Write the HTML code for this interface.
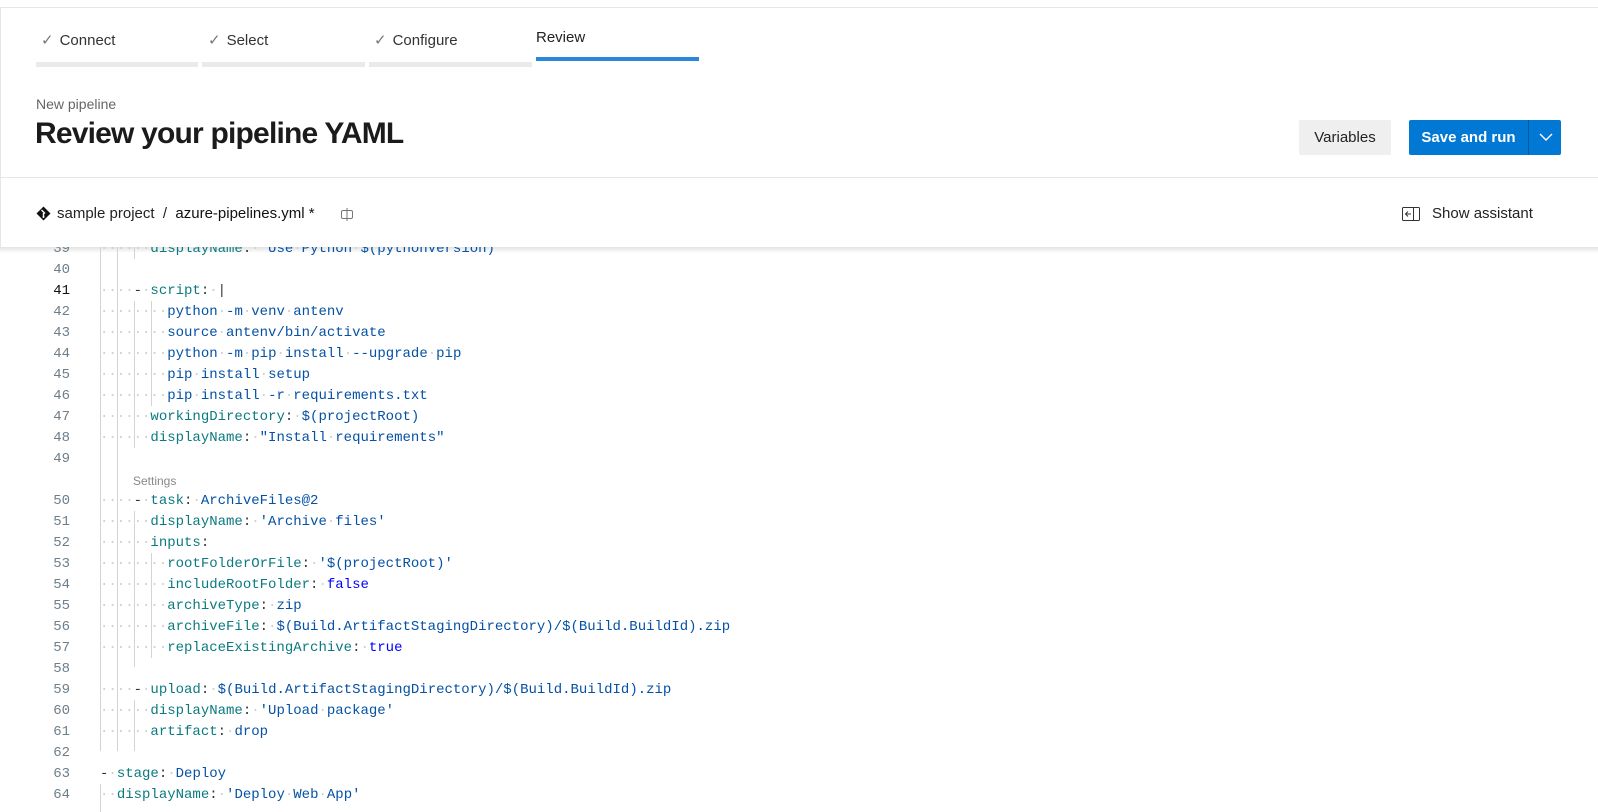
<!DOCTYPE html>
<html><head><meta charset="utf-8"><style>
*{margin:0;padding:0;box-sizing:border-box}
body{width:1598px;height:812px;overflow:hidden;background:#fff;font-family:"Liberation Sans",sans-serif;color:#201f1e;position:relative}
.abs{position:absolute}
.topline{left:0;top:7px;width:1598px;height:1px;background:#e6e6e6}
.leftline{left:0;top:7px;width:1px;height:240px;background:#e6e6e6}
.tab{top:31px;font-size:15px;color:#333}
.tab .ck{color:#777;margin-right:6px}
.bar{top:62px;height:5px;background:#eaeaea}
.ln{position:absolute;left:0;width:70px;text-align:right;color:#6e7e8a;font-family:"Liberation Mono",monospace;font-size:14px}
.cl{position:absolute;left:100px;white-space:pre;font-family:"Liberation Mono",monospace;font-size:14px;color:#0451a5}
.d{color:#cfcfcf}
.k{color:#0b7a80}
.p{color:#333}
.b{color:#0000ff}
.g{position:absolute;width:1px;background:#d3d3d3}
</style></head><body>
<div class="abs topline"></div>
<div class="abs leftline"></div>

<div class="abs tab" style="left:41px"><span class="ck">✓</span>Connect</div>
<div class="abs tab" style="left:208px"><span class="ck">✓</span>Select</div>
<div class="abs tab" style="left:374px"><span class="ck">✓</span>Configure</div>
<div class="abs tab" style="left:536px;top:29px;color:#222">Review</div>
<div class="abs bar" style="left:36px;width:162px"></div>
<div class="abs bar" style="left:202px;width:163px"></div>
<div class="abs bar" style="left:369px;width:163px"></div>
<div class="abs" style="left:536px;top:57px;width:163px;height:4px;background:#2b88d8"></div>

<div class="abs" style="left:36px;top:96px;font-size:14px;color:#666">New pipeline</div>
<div class="abs" style="left:35px;top:117px;font-size:30px;font-weight:bold;color:#1b1b1b;letter-spacing:-0.8px">Review your pipeline YAML</div>

<div class="abs" style="left:1299px;top:120px;width:92px;height:35px;background:#efefef;border-radius:2px;font-size:15px;text-align:center;line-height:35px;color:#222">Variables</div>
<div class="abs" style="left:1409px;top:120px;width:152px;height:35px;background:#0078d4;border-radius:2px"></div>
<div class="abs" style="left:1409px;top:120px;width:119px;height:35px;font-size:15px;font-weight:bold;color:#fff;text-align:center;line-height:35px">Save and run</div>
<div class="abs" style="left:1528px;top:120px;width:1px;height:35px;background:#005a9e"></div>
<svg class="abs" style="left:1538px;top:131px" width="16" height="12" viewBox="0 0 16 12"><path d="M2 3 L8 9 L14 3" stroke="#fff" stroke-width="1.4" fill="none"/></svg>

<div class="abs" style="left:0;top:177px;width:1598px;height:1px;background:#e6e6e6"></div>

<svg class="abs" style="left:36px;top:206px" width="15" height="15" viewBox="0 0 15 15"><path d="M7.5 0.5 L14.5 7.5 L7.5 14.5 L0.5 7.5Z" fill="#111"/><path d="M5.5 4 L9 7.5 M7.5 7 L7.5 11" stroke="#fff" stroke-width="1.4"/><circle cx="7.5" cy="11" r="1" fill="#fff"/></svg>
<div class="abs" style="left:57px;top:205px;font-size:15px;color:#222">sample project&nbsp;&nbsp;/&nbsp;&nbsp;<span style="color:#111">azure-pipelines.yml *</span></div>
<svg class="abs" style="left:340px;top:207px" width="14" height="15" viewBox="0 0 14 15"><rect x="1.5" y="3.5" width="11" height="8" rx="1.5" fill="none" stroke="#777"/><path d="M7 1 V14" stroke="#777"/></svg>

<svg class="abs" style="left:1402px;top:207px" width="18" height="14" viewBox="0 0 18 14"><rect x="0.5" y="0.5" width="17" height="13" rx="1" fill="none" stroke="#333"/><path d="M11.5 1 V13" stroke="#333"/><path d="M9 7 H3.5 M6 4.5 L3.5 7 L6 9.5" stroke="#333" fill="none"/></svg>
<div class="abs" style="left:1432px;top:205px;font-size:15px;color:#222">Show assistant</div>

<div class="abs" style="left:0;top:247px;width:1598px;height:565px;overflow:hidden">
<div style="position:absolute;left:0;top:0;width:1598px;height:6px;background:linear-gradient(#e2e2e2,rgba(255,255,255,0))"></div>
<div class="g" style="left:100px;top:0;height:504px"></div>
<div class="g" style="left:117px;top:0;height:504px"></div>
<div class="g" style="left:134px;top:0;height:12px"></div>
<div class="g" style="left:134px;top:54px;height:147px"></div>
<div class="g" style="left:151px;top:54px;height:105px"></div>
<div class="g" style="left:134px;top:264px;height:156px"></div>
<div class="g" style="left:151px;top:306px;height:105px"></div>
<div class="g" style="left:134px;top:453px;height:51px"></div>
<div class="g" style="left:100px;top:537px;height:40px"></div>
<div class="ln" style="top:-6px">39</div><div class="cl" style="top:-6px"><span class="d">······</span><span class="k">displayName</span><span class="p">:</span><span class="d">·</span>'Use<span class="d">·</span>Python<span class="d">·</span>$(pythonVersion)'</div>
<div class="ln" style="top:15px">40</div>
<div class="ln" style="top:36px;color:#111">41</div><div class="cl" style="top:36px"><span class="d">····</span><span class="p">-</span><span class="d">·</span><span class="k">script</span><span class="p">:</span><span class="d">·</span><span class="p">|</span></div>
<div class="ln" style="top:57px">42</div><div class="cl" style="top:57px"><span class="d">········</span>python<span class="d">·</span>-m<span class="d">·</span>venv<span class="d">·</span>antenv</div>
<div class="ln" style="top:78px">43</div><div class="cl" style="top:78px"><span class="d">········</span>source<span class="d">·</span>antenv/bin/activate</div>
<div class="ln" style="top:99px">44</div><div class="cl" style="top:99px"><span class="d">········</span>python<span class="d">·</span>-m<span class="d">·</span>pip<span class="d">·</span>install<span class="d">·</span>--upgrade<span class="d">·</span>pip</div>
<div class="ln" style="top:120px">45</div><div class="cl" style="top:120px"><span class="d">········</span>pip<span class="d">·</span>install<span class="d">·</span>setup</div>
<div class="ln" style="top:141px">46</div><div class="cl" style="top:141px"><span class="d">········</span>pip<span class="d">·</span>install<span class="d">·</span>-r<span class="d">·</span>requirements.txt</div>
<div class="ln" style="top:162px">47</div><div class="cl" style="top:162px"><span class="d">······</span><span class="k">workingDirectory</span><span class="p">:</span><span class="d">·</span>$(projectRoot)</div>
<div class="ln" style="top:183px">48</div><div class="cl" style="top:183px"><span class="d">······</span><span class="k">displayName</span><span class="p">:</span><span class="d">·</span>"Install<span class="d">·</span>requirements"</div>
<div class="ln" style="top:204px">49</div>
<div class="abs" style="left:133px;top:227px;font-size:12px;color:#888">Settings</div>
<div class="ln" style="top:246px">50</div><div class="cl" style="top:246px"><span class="d">····</span><span class="p">-</span><span class="d">·</span><span class="k">task</span><span class="p">:</span><span class="d">·</span>ArchiveFiles@2</div>
<div class="ln" style="top:267px">51</div><div class="cl" style="top:267px"><span class="d">······</span><span class="k">displayName</span><span class="p">:</span><span class="d">·</span>'Archive<span class="d">·</span>files'</div>
<div class="ln" style="top:288px">52</div><div class="cl" style="top:288px"><span class="d">······</span><span class="k">inputs</span><span class="p">:</span></div>
<div class="ln" style="top:309px">53</div><div class="cl" style="top:309px"><span class="d">········</span><span class="k">rootFolderOrFile</span><span class="p">:</span><span class="d">·</span>'$(projectRoot)'</div>
<div class="ln" style="top:330px">54</div><div class="cl" style="top:330px"><span class="d">········</span><span class="k">includeRootFolder</span><span class="p">:</span><span class="d">·</span><span class="b">false</span></div>
<div class="ln" style="top:351px">55</div><div class="cl" style="top:351px"><span class="d">········</span><span class="k">archiveType</span><span class="p">:</span><span class="d">·</span>zip</div>
<div class="ln" style="top:372px">56</div><div class="cl" style="top:372px"><span class="d">········</span><span class="k">archiveFile</span><span class="p">:</span><span class="d">·</span>$(Build.ArtifactStagingDirectory)/$(Build.BuildId).zip</div>
<div class="ln" style="top:393px">57</div><div class="cl" style="top:393px"><span class="d">········</span><span class="k">replaceExistingArchive</span><span class="p">:</span><span class="d">·</span><span class="b">true</span></div>
<div class="ln" style="top:414px">58</div>
<div class="ln" style="top:435px">59</div><div class="cl" style="top:435px"><span class="d">····</span><span class="p">-</span><span class="d">·</span><span class="k">upload</span><span class="p">:</span><span class="d">·</span>$(Build.ArtifactStagingDirectory)/$(Build.BuildId).zip</div>
<div class="ln" style="top:456px">60</div><div class="cl" style="top:456px"><span class="d">······</span><span class="k">displayName</span><span class="p">:</span><span class="d">·</span>'Upload<span class="d">·</span>package'</div>
<div class="ln" style="top:477px">61</div><div class="cl" style="top:477px"><span class="d">······</span><span class="k">artifact</span><span class="p">:</span><span class="d">·</span>drop</div>
<div class="ln" style="top:498px">62</div>
<div class="ln" style="top:519px">63</div><div class="cl" style="top:519px"><span class="p">-</span><span class="d">·</span><span class="k">stage</span><span class="p">:</span><span class="d">·</span>Deploy</div>
<div class="ln" style="top:540px">64</div><div class="cl" style="top:540px"><span class="d">··</span><span class="k">displayName</span><span class="p">:</span><span class="d">·</span>'Deploy<span class="d">·</span>Web<span class="d">·</span>App'</div>
</div>
</body></html>
